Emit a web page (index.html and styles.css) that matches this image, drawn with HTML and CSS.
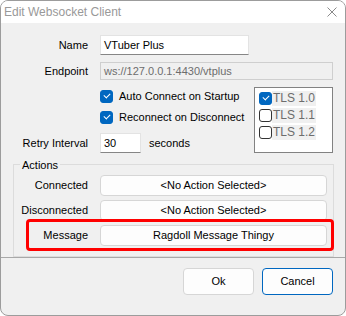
FILE: index.html
```html
<!DOCTYPE html>
<html lang="en">
<head>
    <meta charset="UTF-8">
    <title>Edit Websocket Client</title>
    <link rel="stylesheet" href="styles.css">
</head>
<body>
    <div class="window">
        <div class="title-bar">
            <span class="title">Edit Websocket Client</span>
            <svg class="close" width="10" height="10" viewBox="0 0 10 10">
                <path d="M0.5 0.5 L9.5 9.5 M9.5 0.5 L0.5 9.5" stroke="#8a8a8a" stroke-width="1" fill="none"/>
            </svg>
        </div>

        <div class="content">
            <div class="row name-row">
                <label class="label">Name</label>
                <div class="textbox name-box">VTuber Plus</div>
            </div>
            <div class="row endpoint-row">
                <label class="label">Endpoint</label>
                <div class="textbox disabled endpoint-box">ws://127.0.0.1:4430/vtplus</div>
            </div>

            <div class="options">
                <div class="options-left">
                    <div class="check-row first">
                        <span class="check checked"></span>
                        <span>Auto Connect on Startup</span>
                    </div>
                    <div class="check-row second">
                        <span class="check checked"></span>
                        <span>Reconnect on Disconnect</span>
                    </div>
                    <div class="row retry-row">
                        <label class="label">Retry Interval</label>
                        <div class="textbox retry-box">30</div>
                        <span class="unit">seconds</span>
                    </div>
                </div>
                <div class="tls-list">
                    <div class="tls-item">
                        <span class="check checked"></span>
                        <span class="tls-text">TLS 1.0</span>
                    </div>
                    <div class="tls-item">
                        <span class="check"></span>
                        <span class="tls-text">TLS 1.1</span>
                    </div>
                    <div class="tls-item">
                        <span class="check"></span>
                        <span class="tls-text">TLS 1.2</span>
                    </div>
                </div>
            </div>

            <fieldset class="actions">
                <legend>Actions</legend>
                <div class="action-row">
                    <span class="label">Connected</span>
                    <button class="action-button">&lt;No Action Selected&gt;</button>
                </div>
                <div class="action-row">
                    <span class="label">Disconnected</span>
                    <button class="action-button">&lt;No Action Selected&gt;</button>
                </div>
                <div class="action-row highlighted">
                    <span class="label">Message</span>
                    <button class="action-button">Ragdoll Message Thingy</button>
                </div>
            </fieldset>
        </div>

        <div class="footer">
            <button class="dialog-button">Ok</button>
            <button class="dialog-button default">Cancel</button>
        </div>
    </div>
</body>
</html>
```

FILE: styles.css
```css
body {
    margin: 0;
    background-color: #fff;
    font-family: "Liberation Sans", Arial, sans-serif;
    font-size: 11px;
    color: #000;
    white-space: nowrap;
}
.window {
    width: 346px;
    height: 316px;
    box-sizing: border-box;
    border: 1px solid #9c9c9c;
    border-radius: 8px;
    background-color: #f0f0f0;
    overflow: hidden;
    display: flex;
    flex-direction: column;
}
.title-bar {
    height: 22px;
    background-color: #fff;
    display: flex;
    align-items: center;
    padding: 0 8px 0 3px;
}
.title {
    flex: 1;
    color: #999;
    font-size: 12px;
}
.close {
    display: block;
}
.content {
    flex: 1;
    padding-top: 12px;
}
.row {
    display: flex;
    align-items: center;
}
.label {
    width: 87px;
    text-align: right;
    margin-right: 12px;
    flex-shrink: 0;
}
.textbox {
    box-sizing: border-box;
    height: 20px;
    background-color: #fff;
    border: 1px solid #e3e3e3;
    border-bottom-color: #868686;
    padding: 0 3px;
    line-height: 18px;
}
.name-box {
    width: 149px;
}
.endpoint-row {
    margin-top: 7px;
}
.textbox.disabled {
    height: 18px;
    line-height: 16px;
    background-color: #f0f0f0;
    border: 1px solid #cfcfcf;
    color: #6d6d6d;
}
.endpoint-box {
    width: 233px;
}
.options {
    display: flex;
    margin-top: 7px;
}
.options-left {
    flex: 1;
    padding-top: 3px;
}
.check-row {
    display: flex;
    align-items: center;
    height: 13px;
    margin-left: 99px;
    gap: 6px;
}
.check-row.second {
    margin-top: 8px;
}
.retry-row {
    margin-top: 9px;
}
.retry-box {
    width: 41px;
}
.unit {
    margin-left: 8px;
}
.check {
    box-sizing: border-box;
    width: 13px;
    height: 13px;
    border: 1px solid #333;
    border-radius: 3px;
    background-color: #fff;
    flex-shrink: 0;
    position: relative;
}
.check.checked {
    background-color: #0067c0;
    border-color: #0067c0;
}
.check.checked::after {
    content: "";
    position: absolute;
    left: 3px;
    top: 2px;
    width: 5px;
    height: 3px;
    border-left: 1px solid #fff;
    border-bottom: 1px solid #fff;
    transform: rotate(-45deg);
}
.tls-list {
    box-sizing: border-box;
    width: 79px;
    height: 66px;
    margin-right: 12px;
    background-color: #fff;
    border: 1px solid #828282;
    padding: 2px 0 0 4px;
}
.tls-item {
    display: flex;
    align-items: center;
    height: 17px;
}
.tls-text {
    color: #6d6d6d;
    background-color: #f0f0f0;
    padding: 0 1px;
    line-height: 15px;
    font-size: 12px;
}
.actions {
    margin: 4px 11px 0 12px;
    padding: 2px 0 10px 0;
    border: 1px solid #dcdcdc;
    min-width: 0;
}
.actions legend {
    margin-left: 6px;
    padding: 0 2px;
    line-height: 16px;
}
.action-row {
    display: flex;
    align-items: center;
    position: relative;
    margin-top: 4px;
}
.action-row:first-of-type {
    margin-top: 0;
}
.action-row .label {
    width: 74px;
}
.action-button {
    box-sizing: border-box;
    width: 227px;
    height: 21px;
    background-color: #fdfdfd;
    border: 1px solid #d6d6d6;
    border-radius: 4px;
    font-family: inherit;
    font-size: 11px;
    color: #000;
    padding: 0;
}
.action-row.highlighted::after {
    content: "";
    position: absolute;
    left: 12px;
    right: -1px;
    top: -6px;
    bottom: -5px;
    border: 3px solid #f00;
    border-radius: 4px;
}
.footer {
    border-top: 1px solid #a8a8a8;
    height: 48px;
    display: flex;
    justify-content: flex-end;
    align-items: flex-start;
    gap: 8px;
    padding: 10px 12px 0 0;
}
.dialog-button {
    box-sizing: border-box;
    width: 71px;
    height: 27px;
    background-color: #fdfdfd;
    border: 1px solid #d6d6d6;
    border-radius: 4px;
    font-family: inherit;
    font-size: 11px;
    color: #000;
}
.dialog-button.default {
    border-color: #0067c0;
}
```
